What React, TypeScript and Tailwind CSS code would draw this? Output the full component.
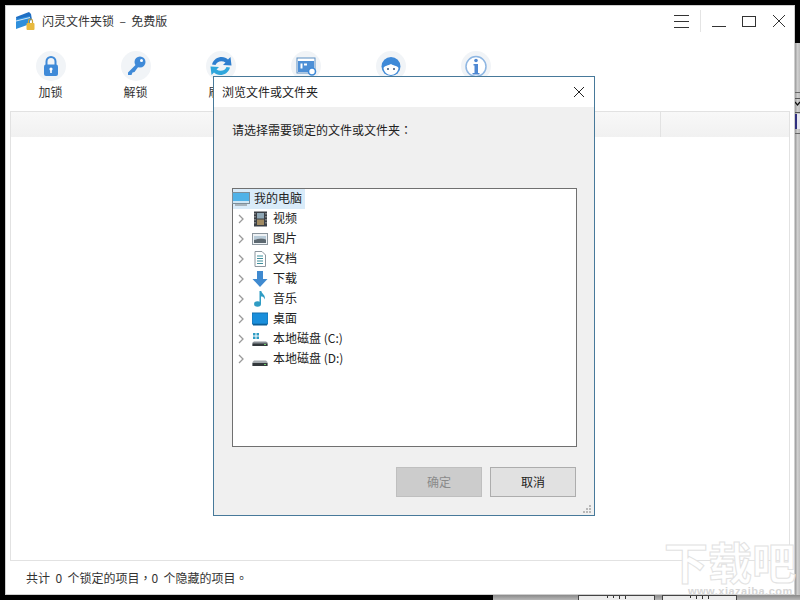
import React from "react";

const cjk = { fontFamily: '"Noto Sans CJK SC", "Liberation Sans", sans-serif' };
const tc = { fontFamily: '"Noto Sans CJK TC", sans-serif' };

function Circle({ children }: { children: React.ReactNode }) {
  return (
    <div className="w-[30px] h-[30px] rounded-full bg-[#f1f4f7] flex items-center justify-center">
      <svg width="24" height="24" viewBox="0 0 24 24">{children}</svg>
    </div>
  );
}

const B = "#3f8ad8";

const tools: { label: string; icon: React.ReactNode }[] = [
  {
    label: "加锁",
    icon: (
      <>
        <path d="M7.5 11V7.5a4.5 4.5 0 0 1 9 0V11" fill="none" stroke={B} strokeWidth="2" />
        <rect x="5" y="10.5" width="14" height="11.5" rx="2" fill={B} />
        <circle cx="12" cy="15" r="1.6" fill="#fff" />
        <rect x="11.2" y="15" width="1.6" height="4" fill="#fff" />
      </>
    ),
  },
  {
    label: "解锁",
    icon: (
      <>
        <circle cx="16" cy="8" r="5.5" fill={B} />
        <circle cx="17.5" cy="6.5" r="1.5" fill="#fff" />
        <path d="M12.5 10 L4 18.5 L4 21 L7.5 21 L8.5 18.5 L10.5 18 L14.5 12.5 Z" fill={B} />
      </>
    ),
  },
  {
    label: "刷新",
    icon: (
      <>
        <path d="M3 10.5 C5 2.500 15 1 19 5.500 L21.500 3 L22.500 11.500 L14 11 L16.500 8.500 C13 6 8 7 6.500 11 Z" fill="#2f7fcf" />
        <path d="M21 13.500 C19 21.500 9 23 5 18.500 L2.500 21 L1.500 12.500 L10 13 L7.500 15.500 C11 18 16 17 17.500 13 Z" fill="#2fa6dc" />
      </>
    ),
  },
  {
    label: "",
    icon: (
      <>
        <rect x="3" y="4" width="18" height="15" fill="#fff" stroke="#5c8fc4" strokeWidth="1" />
        <rect x="4" y="7" width="16" height="11" fill="#4d8fd6" />
        <rect x="6.5" y="9.5" width="2" height="5" fill="#fff" />
        <rect x="10" y="9.5" width="3" height="2" fill="#fff" />
        <circle cx="18" cy="17.5" r="3.5" fill="#fff" stroke={B} strokeWidth="1.6" />
      </>
    ),
  },
  {
    label: "",
    icon: (
      <>
        <circle cx="12" cy="12.5" r="9.5" fill={B} />
        <path d="M4.5 14 C6 11 9 12 12 10 C14 12 18 11 19.5 14 C19 18 16 21 12 21 C8 21 5 18 4.5 14 Z" fill="#fff" />
        <circle cx="9" cy="15" r="1" fill="#39557a" />
        <circle cx="15" cy="15" r="1" fill="#39557a" />
      </>
    ),
  },
  {
    label: "",
    icon: (
      <>
        <circle cx="12" cy="12.5" r="10" fill="#fff" stroke="#8eb6e2" strokeWidth="1.5" />
        <circle cx="12" cy="6.5" r="1.8" fill="#4f88d2" />
        <path d="M9.5 10 H14 V19 H15.5 V20.5 H8.5 V19 H10.5 V11.5 H9.5 Z" fill="#4f88d2" />
      </>
    ),
  },
];

const treeItems: { label: string; icon: React.ReactNode }[] = [
  {
    label: "视频",
    icon: (
      <>
        <rect x="2" y="0.5" width="13" height="15" fill="#3a3f45" />
        <rect x="5" y="2" width="7" height="5.5" fill="#8fa7b5" />
        <rect x="5" y="8.5" width="7" height="5.5" fill="#a08a62" />
        <path d="M3 2v12M14 2v12" stroke="#bbb" strokeWidth="1" strokeDasharray="1.5 1.5" />
      </>
    ),
  },
  {
    label: "图片",
    icon: (
      <>
        <rect x="0.5" y="2.5" width="15" height="11" fill="#eef2f5" stroke="#8c969e" />
        <path d="M2 5h12v3.5C10 7 6 7.5 2 9Z" fill="#b8cbd8" />
        <path d="M2 9c4-1.5 8-2 12-.5V12H2Z" fill="#5c6870" />
      </>
    ),
  },
  {
    label: "文档",
    icon: (
      <>
        <path d="M3 0.5h7l3.5 3.5v11.500H3Z" fill="#fff" stroke="#8c969e" />
        <path d="M5 5h6M5 7.500h6M5 10h6M5 12.500h6" stroke="#3f8f9c" strokeWidth="1" />
      </>
    ),
  },
  {
    label: "下载",
    icon: <path d="M5 0h6v8h4.500L8 16 0.500 8H5Z" fill="#3f8ad0" />,
  },
  {
    label: "音乐",
    icon: (
      <>
        <ellipse cx="5.500" cy="13" rx="3.500" ry="2.800" fill="#2f9cc4" />
        <path d="M7.500 0h1.800c.5 3 4.500 4 3.500 8.500C12 6 10.500 5.500 9 5.500V13H7.500Z" fill="#2f9cc4" />
      </>
    ),
  },
  {
    label: "桌面",
    icon: (
      <>
        <rect x="0" y="2" width="16" height="11" fill="#1a8fdc" stroke="#1270b0" />
        <rect x="1" y="13" width="14" height="1.500" fill="#0d5f98" />
      </>
    ),
  },
  {
    label: "本地磁盘 (C:)",
    icon: (
      <>
        <rect x="1" y="2" width="2.500" height="2.500" fill="#2f9cc4" />
        <rect x="4.500" y="2" width="2.500" height="2.500" fill="#2f9cc4" />
        <rect x="1" y="5.500" width="2.500" height="2.500" fill="#2f9cc4" />
        <rect x="4.500" y="5.500" width="2.500" height="2.500" fill="#2f9cc4" />
        <path d="M2 10.500h12l1.500 1V15H.5v-3.500Z" fill="#8a9096" />
        <rect x="0.500" y="12.500" width="15" height="2.500" fill="#33383c" />
        <rect x="12" y="13" width="2" height="1" fill="#6fd06f" />
      </>
    ),
  },
  {
    label: "本地磁盘 (D:)",
    icon: (
      <>
        <path d="M2 9.500h12l1.500 1.500v4H.5v-4Z" fill="#a4aaae" />
        <rect x="0.500" y="12" width="15" height="3" fill="#33383c" />
        <rect x="12" y="13" width="2" height="1" fill="#6fd06f" />
      </>
    ),
  },
];

function Chevron() {
  return (
    <svg width="8" height="10" viewBox="0 0 8 10" className="shrink-0">
      <path d="M2 1l4 4-4 4" fill="none" stroke="#9a9a9a" strokeWidth="1.300" />
    </svg>
  );
}

function Toolbar() {
  return (
    <div className="h-[74px] flex items-start pl-[3px] pt-[14px] shrink-0">
      {tools.map((t, i) => (
        <div key={i} className="w-[85px] flex flex-col items-center">
          <Circle>{t.icon}</Circle>
          {t.label && <div className="text-[12px] leading-[16px] mt-[3px] text-[#333]">{t.label}</div>}
        </div>
      ))}
    </div>
  );
}

function TitleBar() {
  return (
    <div className="h-[32px] flex items-center pl-[10px] shrink-0">
      <svg width="20" height="20" viewBox="0 0 20 20" className="mt-[-1px]">
        <path d="M1 6 L14 1 L16 3 L17 9 L2 13Z" fill="#1f6fc4" />
        <path d="M1 8 L15 5 L15 13 L1 18Z" fill="#2e8fdc" />
        <path d="M1 10 L15 6.500" stroke="#fff" strokeWidth="0.800" />
        <rect x="11.500" y="12" width="8" height="7" rx="1" fill="#e8b93e" />
        <path d="M13.500 12v-2a2 2 0 0 1 4 0v2" fill="none" stroke="#c9a238" strokeWidth="1.200" />
      </svg>
      <div className="ml-[7px] text-[12px] text-[#333] whitespace-pre">闪灵文件夹锁  –  免费版</div>
      <div className="ml-auto flex items-center">
        <div className="w-[15px] h-[13px] flex flex-col justify-between">
          <div className="h-px bg-[#333]" />
          <div className="h-px bg-[#333]" />
          <div className="h-px bg-[#333]" />
        </div>
        <div className="w-px h-[22px] bg-[#e4e4e4] ml-[11px]" />
        <div className="w-[14px] h-px bg-[#333] ml-[11px] mt-[11px]" />
        <div className="w-[14px] h-[11px] border border-[#333] ml-[16px]" />
        <svg width="14" height="14" viewBox="0 0 14 14" className="ml-[16px] mr-[9px]">
          <path d="M1 1l12 12M13 1L1 13" stroke="#333" strokeWidth="1" />
        </svg>
      </div>
    </div>
  );
}

function Dialog() {
  return (
    <div className="absolute left-[213px] top-[76px] w-[382px] h-[440px] border border-[#47799a] bg-[#f0f0f0] flex flex-col text-[12px] text-[#222]">
      <div className="h-[30px] bg-white flex items-center justify-between pl-[8px] pr-[9px] shrink-0">
        <span>浏览文件或文件夹</span>
        <svg width="12" height="12" viewBox="0 0 12 12">
          <path d="M1 1l10 10M11 1L1 11" stroke="#222" strokeWidth="1" />
        </svg>
      </div>
      <div className="pl-[18px] pt-[14px] h-[81px] shrink-0">
        请选择需要锁定的文件或文件夹<span style={tc}>：</span>
      </div>
      <div className="ml-[18px] w-[345px] h-[259px] border border-[#707070] bg-white shrink-0">
        <div className="w-[72px] h-[20px] bg-[#d9ebf9] flex items-center">
          <svg width="18" height="14" viewBox="0 0 18 14" className="ml-[-1px] shrink-0">
            <rect x="0.500" y="0.500" width="17" height="11" fill="#4fb2e8" stroke="#7d8e9a" />
            <rect x="1" y="9" width="16" height="2" fill="#cfe6f4" />
            <rect x="3" y="12" width="12" height="2" fill="#a8b4bc" />
          </svg>
          <span className="ml-[4px] pb-[2px]">我的电脑</span>
        </div>
        {treeItems.map((it) => (
          <div key={it.label} className="h-[20px] flex items-center pl-[4px]">
            <Chevron />
            <svg width="16" height="16" viewBox="0 0 16 16" className="ml-[7px] shrink-0">
              {it.icon}
            </svg>
            <span className="ml-[5px] pb-[2px]">{it.label}</span>
          </div>
        ))}
      </div>
      <div className="flex justify-end gap-[8px] mt-[20px] pr-[18px]">
        <div className="w-[86px] h-[30px] bg-[#cccccc] border border-[#bfbfbf] text-[#8a8a8a] flex items-center justify-center">确定</div>
        <div className="w-[86px] h-[30px] bg-[#e1e1e1] border border-[#adadad] flex items-center justify-center">取消</div>
      </div>
      <svg width="10" height="10" viewBox="0 0 10 10" className="absolute right-[2px] bottom-[1px]">
        <path d="M7 1h2v2H7ZM4 4h2v2H4ZM7 4h2v2H7ZM1 7h2v2H1ZM4 7h2v2H4ZM7 7h2v2H7Z" fill="#b8b8b8" />
      </svg>
    </div>
  );
}

function Watermark() {
  return (
    <div className="absolute left-[664px] top-[536px] pointer-events-none">
      <div className="text-[44px] leading-[50px] font-bold text-white [-webkit-text-stroke:1px_#e2e2e2] whitespace-nowrap">下载吧</div>
      <div className="text-[11px] leading-[10px] font-bold text-[#d6d6d6] pl-[24px] tracking-[0.5px]" style={{ fontFamily: '"Liberation Sans", sans-serif' }}>www.xiazaiba.com</div>
    </div>
  );
}

function RightStrip() {
  return (
    <div className="w-[5px] flex flex-col shrink-0 bg-gradient-to-r from-[#9a9a9a] via-[#cfcfcf] to-[#bdbdbd]">
      <div className="h-[38px] bg-black shrink-0" />
      <div className="h-[49px] shrink-0" />
      <div className="h-px bg-[#666] shrink-0" />
      <div className="h-[5px] shrink-0" />
      <div className="h-px bg-[#555] shrink-0" />
      <svg width="5" height="8" viewBox="0 0 5 8" className="shrink-0 mt-[2px]">
        <path d="M0 1l2.500 3L5 1" fill="none" stroke="#111" strokeWidth="1.200" />
      </svg>
      <div className="h-px bg-[#555] shrink-0 mt-[3px]" />
      <div className="h-[15px] bg-[#e8e8f0] shrink-0 mt-[1px] border-l-2 border-[#303080]" />
      <div className="h-px bg-[#666] shrink-0 mt-[4px]" />
    </div>
  );
}

export default function App() {
  return (
    <div className="relative w-[800px] h-[600px] bg-black overflow-hidden flex flex-col" style={cjk}>
      <div className="h-[5px] shrink-0" />
      <div className="flex h-[590px] shrink-0">
        <div className="w-[5px] shrink-0" />
        <div className="w-[790px] h-[590px] bg-white flex flex-col shadow-[inset_0_0_0_1px_#cfcfcf]">
          <TitleBar />
          <Toolbar />
          <div className="ml-[5px] w-[780px] h-[450px] border border-[#e2e2e2] shrink-0">
            <div className="h-[25px] bg-gradient-to-b from-[#f8f8f8] to-[#f1f1f1] flex justify-end">
              <div className="w-[129px] border-l border-[#e2e2e2]" />
            </div>
          </div>
          <div className="h-[33px] flex items-center pl-[21px] text-[12px] text-[#333] whitespace-pre">
            共计  0  个锁定的项目<span style={tc}>，</span>0  个隐藏的项目<span style={tc}>。</span>
          </div>
        </div>
        <RightStrip />
      </div>
      <div className="h-[5px] flex shrink-0">
        <div className="w-[493px]" />
        <div className="flex-1 flex bg-gradient-to-b from-[#8a8a8a] to-[#b8b8b8]">
          <div className="w-[85px]" />
          <div className="w-[77px] bg-[#ececec] border-t border-x border-[#444] flex justify-center gap-[5px]">
            <div className="w-px h-[2px] bg-[#333]" />
            <div className="w-px h-[2px] bg-[#333]" />
            <div className="w-px h-[3px] bg-[#333]" />
            <div className="w-px h-[3px] bg-[#333]" />
          </div>
          <div className="w-[7px]" />
          <div className="w-[75px] bg-[#ececec] border-t border-x border-[#444] flex justify-center gap-[5px]">
            <div className="w-px h-[2px] bg-[#333]" />
            <div className="w-px h-[3px] bg-[#333]" />
            <div className="w-px h-[3px] bg-[#333]" />
            <div className="w-px h-[3px] bg-[#333]" />
          </div>
        </div>
      </div>
      <Dialog />
      <Watermark />
    </div>
  );
}
